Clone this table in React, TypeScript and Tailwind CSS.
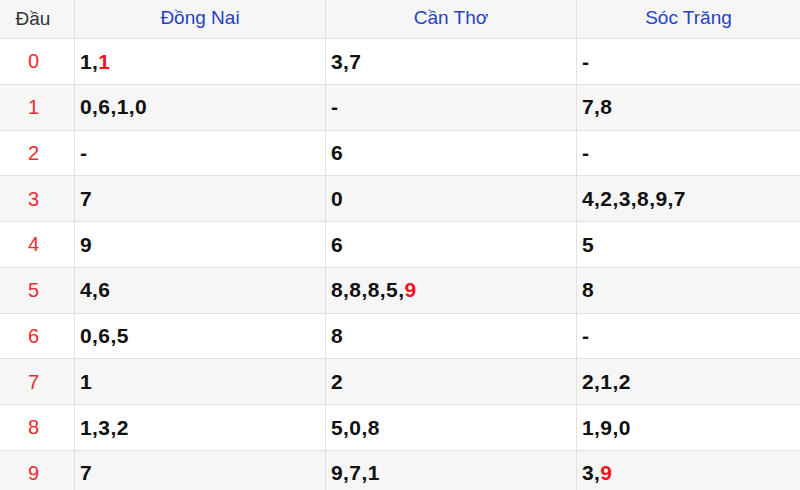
const cols = ["Đồng Nai", "Cần Thơ", "Sóc Trăng"];

// each cell: list of [digit, isRed]
type Cell = [string, boolean][];

const parse = (s: string, red: number[] = []): Cell =>
  s === "-" ? [["-", false]] : s.split(",").map((d, i) => [d, red.includes(i)]);

const rows: Cell[][] = [
  [parse("1,1", [1]), parse("3,7"), parse("-")],
  [parse("0,6,1,0"), parse("-"), parse("7,8")],
  [parse("-"), parse("6"), parse("-")],
  [parse("7"), parse("0"), parse("4,2,3,8,9,7")],
  [parse("9"), parse("6"), parse("5")],
  [parse("4,6"), parse("8,8,8,5,9", [4]), parse("8")],
  [parse("0,6,5"), parse("8"), parse("-")],
  [parse("1"), parse("2"), parse("2,1,2")],
  [parse("1,3,2"), parse("5,0,8"), parse("1,9,0")],
  [parse("7"), parse("9,7,1"), parse("3,9", [1])],
];

function Value({ cell }: { cell: Cell }) {
  return (
    <>
      {cell.map(([d, red], i) => (
        <span key={i}>
          {i > 0 && ","}
          <span className={red ? "text-[#f5121b]" : ""}>{d}</span>
        </span>
      ))}
    </>
  );
}

export default function App() {
  return (
    <div className="w-[800px] h-[490px] overflow-hidden bg-white font-['Liberation_Sans',Arial,sans-serif]">
      <div className="grid grid-cols-[74px_251px_251px_1fr]">
        <div className="h-[39px] flex items-center justify-center pr-[8px] bg-[#f6f6f6] border-b border-[#e1e1e1] text-[19px] text-[#333]">
          Đầu
        </div>
        {cols.map((c) => (
          <div
            key={c}
            className="h-[39px] flex items-center justify-center pb-[2px] bg-[#f6f6f6] border-b border-l border-[#e1e1e1] text-[19px] text-[#2642c2]"
          >
            {c}
          </div>
        ))}
        {rows.map((r, i) => {
          const bg = i % 2 === 1 ? "bg-[#f6f6f6]" : "bg-white";
          return [
            <div
              key={`h${i}`}
              className={`h-[45.75px] flex items-center justify-center pr-[7px] border-b border-[#e1e1e1] text-[20px] text-[#ee2a30] ${bg}`}
            >
              {i}
            </div>,
            ...r.map((cell, j) => (
              <div
                key={`${i}-${j}`}
                className={`h-[45.75px] flex items-center pl-[5px] border-b border-l border-[#e1e1e1] text-[21px] font-bold tracking-[0.4px] text-[#111] ${bg}`}
              >
                <Value cell={cell} />
              </div>
            )),
          ];
        })}
      </div>
    </div>
  );
}
